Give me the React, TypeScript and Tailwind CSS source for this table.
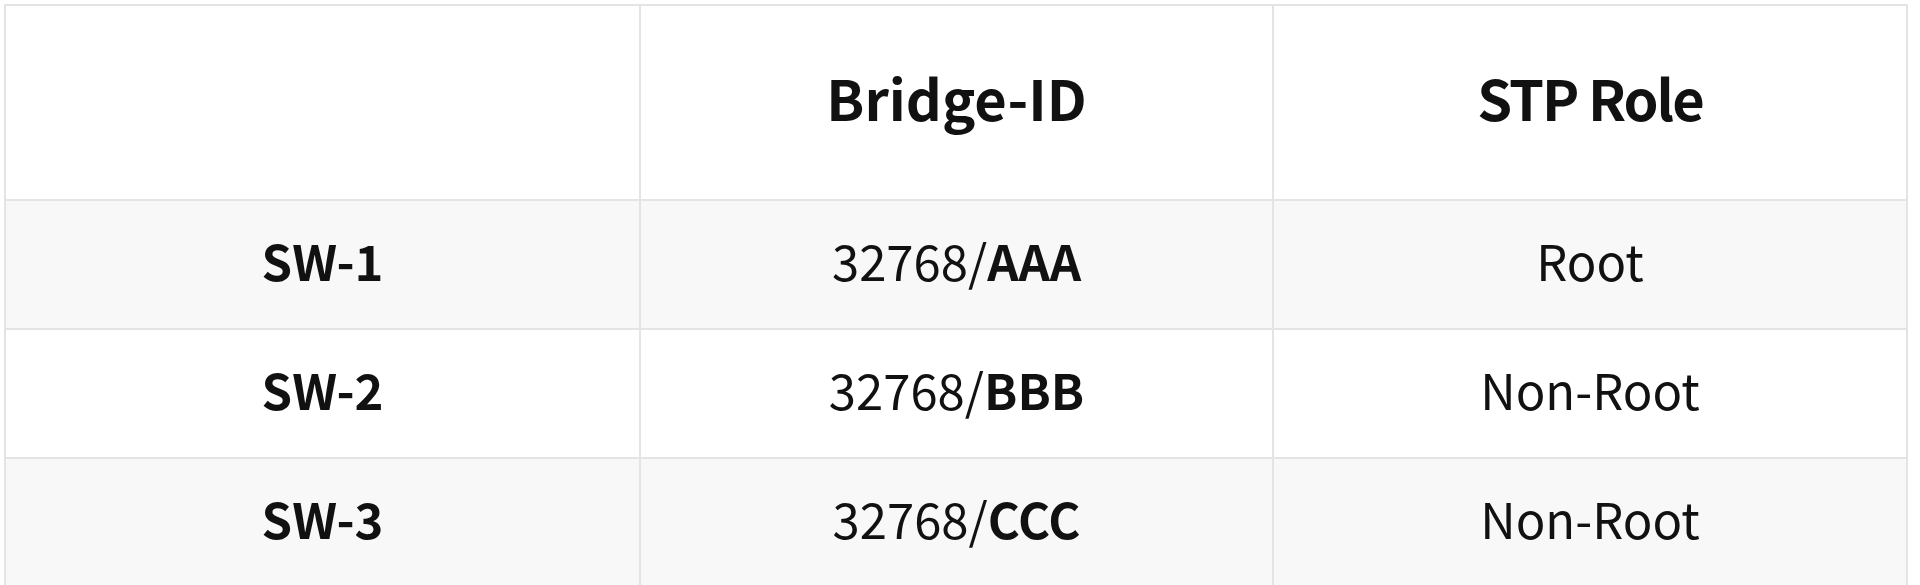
import React from "react";

type Row = {
  name: string;
  prio: string;
  mac: string;
  role: string;
};

const rows: Row[] = [
  { name: "SW-1", prio: "32768/", mac: "AAA", role: "Root" },
  { name: "SW-2", prio: "32768/", mac: "BBB", role: "Non-Root" },
  { name: "SW-3", prio: "32768/", mac: "CCC", role: "Non-Root" },
];

const cell =
  "flex items-center justify-center border-r-2 border-b-2 border-[#e4e4e4]";

export default function App() {
  return (
    <div
      className="w-[1920px] h-[585px] overflow-hidden bg-white pl-[4px] pt-[4px] text-[#111]"
      style={{ fontFamily: '"Noto Sans CJK KR", "Noto Sans", sans-serif' }}
    >
      <div className="grid w-[1904px] grid-cols-[635px_633px_634px] border-l-2 border-t-2 border-[#e4e4e4]">
        {/* Header */}
        <div className={`${cell} h-[195px] bg-white`} />
        <div className={`${cell} h-[195px] bg-white pb-[12px] text-[56px] font-bold`}>
          Bridge-ID
        </div>
        <div className={`${cell} h-[195px] bg-white pb-[12px] text-[56px] font-bold tracking-[-2px]`}>
          STP Role
        </div>

        {/* Body */}
        {rows.map((r, i) => {
          const bg = i % 2 === 0 ? "bg-[#f8f8f8]" : "bg-white";
          return (
            <React.Fragment key={r.name}>
              <div className={`${cell} h-[129px] ${bg} pb-[9px] text-[49px] font-bold`}>
                {r.name}
              </div>
              <div className={`${cell} h-[129px] ${bg} pb-[9px] text-[49px]`}>
                {r.prio}
                <span className="font-bold">{r.mac}</span>
              </div>
              <div className={`${cell} h-[129px] ${bg} pb-[9px] text-[49px]`}>
                {r.role}
              </div>
            </React.Fragment>
          );
        })}
      </div>
    </div>
  );
}
